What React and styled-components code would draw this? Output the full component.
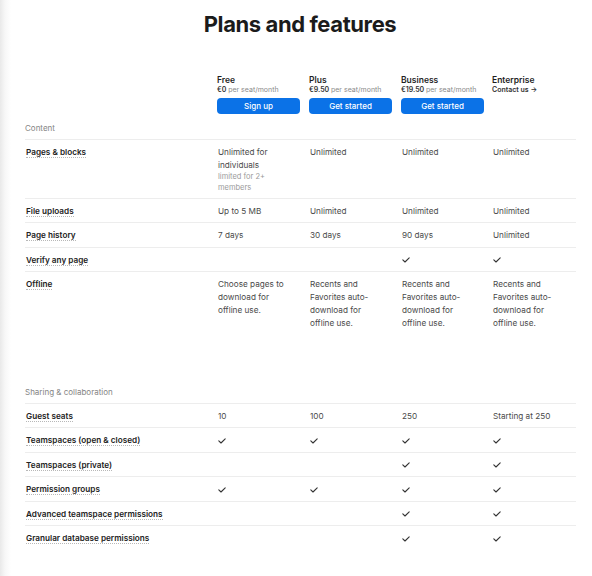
import React from "react";
import styled, { createGlobalStyle } from "styled-components";

const GlobalStyle = createGlobalStyle`
  html, body {
    margin: 0;
    padding: 0;
    background: linear-gradient(to right, #e9e9e9 0, #f7f7f7 5px, #ffffff 11px);
    font-family: Inter, "Noto Sans", sans-serif;
    color: #1f1f1f;
  }
`;

const plans = [
  { name: "Free", price: "€0", per: "per seat/month", cta: "Sign up" },
  { name: "Plus", price: "€9.50", per: "per seat/month", cta: "Get started" },
  { name: "Business", price: "€19.50", per: "per seat/month", cta: "Get started" },
  { name: "Enterprise", contact: "Contact us →" },
];

const CHECK = "check";

const sections = [
  {
    title: "Content",
    rows: [
      {
        label: "Pages & blocks",
        values: [
          { text: "Unlimited for individuals", note: "limited for 2+ members" },
          "Unlimited",
          "Unlimited",
          "Unlimited",
        ],
      },
      { label: "File uploads", values: ["Up to 5 MB", "Unlimited", "Unlimited", "Unlimited"] },
      { label: "Page history", values: ["7 days", "30 days", "90 days", "Unlimited"] },
      { label: "Verify any page", values: [null, null, CHECK, CHECK] },
      {
        label: "Offline",
        values: [
          "Choose pages to download for offline use.",
          "Recents and Favorites auto-download for offline use.",
          "Recents and Favorites auto-download for offline use.",
          "Recents and Favorites auto-download for offline use.",
        ],
      },
    ],
  },
  {
    title: "Sharing & collaboration",
    rows: [
      { label: "Guest seats", values: ["10", "100", "250", "Starting at 250"] },
      { label: "Teamspaces (open & closed)", values: [CHECK, CHECK, CHECK, CHECK] },
      { label: "Teamspaces (private)", values: [null, null, CHECK, CHECK] },
      { label: "Permission groups", values: [CHECK, CHECK, CHECK, CHECK] },
      { label: "Advanced teamspace permissions", values: [null, null, CHECK, CHECK] },
      { label: "Granular database permissions", values: [null, null, CHECK, CHECK] },
    ],
  },
];

const CheckIcon = () => (
  <svg width="8" height="6" viewBox="0 0 8 6" fill="none">
    <path d="M0.8 2.9 L3 5 L7.2 0.8" stroke="#333" strokeWidth="1.1" strokeLinecap="round" strokeLinejoin="round" />
  </svg>
);

const renderValue = (v) => {
  if (v === CHECK) return <CheckWrap><CheckIcon /></CheckWrap>;
  if (v && typeof v === "object") {
    return (
      <>
        <div>{v.text}</div>
        <Note>{v.note}</Note>
      </>
    );
  }
  return v;
};

const App = () => {
  return (
    <>
      <GlobalStyle />
      <Page>
        <Title>Plans and features</Title>
        <Table>
          <HeaderRow>
            <div />
            {plans.map((p) => (
              <PlanHead key={p.name}>
                <PlanName>{p.name}</PlanName>
                {p.contact ? (
                  <Price>{p.contact}</Price>
                ) : (
                  <Price>
                    {p.price} <Per>{p.per}</Per>
                  </Price>
                )}
                {p.cta && <PlanButton>{p.cta}</PlanButton>}
              </PlanHead>
            ))}
          </HeaderRow>

          {sections.map((s, si) => (
            <Section key={s.title} $first={si === 0}>
              <SectionTitle>{s.title}</SectionTitle>
              {s.rows.map((r) => (
                <Row key={r.label}>
                  <Label>
                    <span>{r.label}</span>
                  </Label>
                  {r.values.map((v, i) => (
                    <Cell key={i}>{renderValue(v)}</Cell>
                  ))}
                </Row>
              ))}
            </Section>
          ))}
        </Table>
      </Page>
    </>
  );
};

export default App;

const Page = styled.div`
  width: 592px;
  min-height: 576px;
  padding-top: 11px;
  box-sizing: border-box;
`;

const Title = styled.h1`
  margin: 0;
  text-align: center;
  font-size: 22px;
  line-height: 26px;
  font-weight: 700;
  letter-spacing: -0.4px;
  color: #1b1b1b;
  padding-left: 8px;
`;

const Table = styled.div`
  margin-left: 25px;
  width: 551px;
`;

const Grid = styled.div`
  display: grid;
  grid-template-columns: 192px 92px 92px 91px 1fr;
`;

const HeaderRow = styled(Grid)`
  margin-top: 38px;
`;

const PlanHead = styled.div`
  display: flex;
  flex-direction: column;
  align-items: flex-start;
`;

const PlanName = styled.div`
  font-size: 8.5px;
  line-height: 10px;
  font-weight: 600;
  color: #1f1f1f;
`;

const Price = styled.div`
  font-size: 7px;
  line-height: 9px;
  font-weight: 600;
  color: #333;
`;

const Per = styled.span`
  font-weight: 400;
  color: #8a8a8a;
`;

const PlanButton = styled.button`
  margin-top: 4px;
  width: 83px;
  height: 16px;
  border: none;
  border-radius: 4px;
  background: #0b72e7;
  color: #fff;
  font-family: Inter, "Noto Sans", sans-serif;
  font-size: 8px;
  font-weight: 500;
  padding: 0;
  cursor: pointer;
`;

const Section = styled.div`
  margin-top: ${(p) => (p.$first ? "9px" : "52px")};
`;

const SectionTitle = styled.div`
  font-size: 8px;
  line-height: 11px;
  color: #858585;
  padding-bottom: 5px;
  border-bottom: 1px solid #ededed;
`;

const Row = styled(Grid)`
  padding: 6px 0 4.5px;
  border-bottom: 1px solid #ededed;

  &:last-child {
    border-bottom: none;
  }
`;

const Label = styled.div`
  font-size: 8.2px;
  line-height: 13px;
  font-weight: 600;
  color: #222;
  padding-left: 1px;

  span {
    border-bottom: 1px dotted #b8b8b8;
  }
`;

const Cell = styled.div`
  font-size: 8.2px;
  line-height: 13px;
  color: #4a4a4a;
  padding-right: 20px;
  padding-left: 1px;
`;

const Note = styled.div`
  font-size: 7.5px;
  line-height: 10.5px;
  color: #9a9a9a;
  padding-right: 4px;
`;

const CheckWrap = styled.div`
  display: flex;
  align-items: center;
  height: 13px;
`;
